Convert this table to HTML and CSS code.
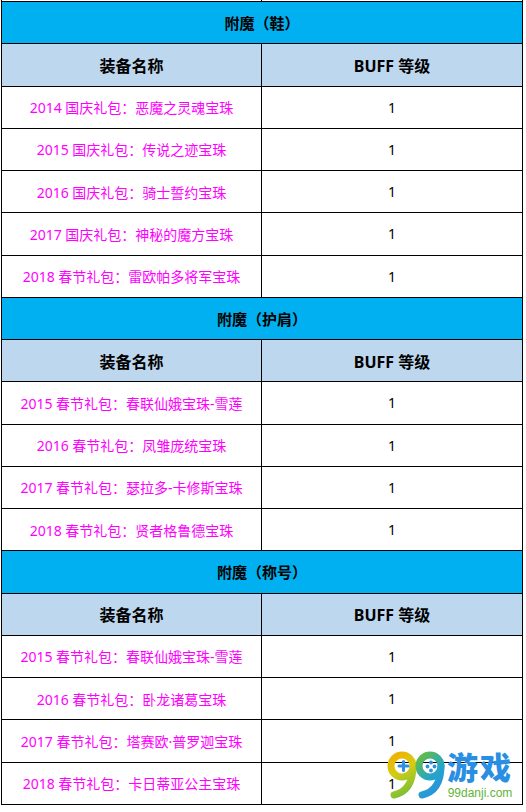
FILE: index.html
```html
<!DOCTYPE html>
<html lang="zh-CN">
<head>
<meta charset="utf-8">
<title>附魔</title>
<link rel="stylesheet" href="styles.css">
</head>
<body>
<div class="sheet">
  <div class="row stub"><div class="cell"></div><div class="cell"></div></div>

  <div class="row title"><div class="cell">附魔（鞋）</div></div>
  <div class="row head"><div class="cell">装备名称</div><div class="cell">BUFF 等级</div></div>
  <div class="row data"><div class="cell name">2014 国庆礼包：恶魔之灵魂宝珠</div><div class="cell">1</div></div>
  <div class="row data"><div class="cell name">2015 国庆礼包：传说之迹宝珠</div><div class="cell">1</div></div>
  <div class="row data"><div class="cell name">2016 国庆礼包：骑士誓约宝珠</div><div class="cell">1</div></div>
  <div class="row data"><div class="cell name">2017 国庆礼包：神秘的魔方宝珠</div><div class="cell">1</div></div>
  <div class="row data"><div class="cell name">2018 春节礼包：雷欧帕多将军宝珠</div><div class="cell">1</div></div>

  <div class="row title"><div class="cell">附魔（护肩）</div></div>
  <div class="row head"><div class="cell">装备名称</div><div class="cell">BUFF 等级</div></div>
  <div class="row data"><div class="cell name">2015 春节礼包：春联仙娥宝珠-雪莲</div><div class="cell">1</div></div>
  <div class="row data"><div class="cell name">2016 春节礼包：凤雏庞统宝珠</div><div class="cell">1</div></div>
  <div class="row data"><div class="cell name">2017 春节礼包：瑟拉多-卡修斯宝珠</div><div class="cell">1</div></div>
  <div class="row data"><div class="cell name">2018 春节礼包：贤者格鲁德宝珠</div><div class="cell">1</div></div>

  <div class="row title"><div class="cell">附魔（称号）</div></div>
  <div class="row head"><div class="cell">装备名称</div><div class="cell">BUFF 等级</div></div>
  <div class="row data"><div class="cell name">2015 春节礼包：春联仙娥宝珠-雪莲</div><div class="cell">1</div></div>
  <div class="row data"><div class="cell name">2016 春节礼包：卧龙诸葛宝珠</div><div class="cell">1</div></div>
  <div class="row data"><div class="cell name">2017 春节礼包：塔赛欧·普罗迦宝珠</div><div class="cell">1</div></div>
  <div class="row data"><div class="cell name">2018 春节礼包：卡日蒂亚公主宝珠</div><div class="cell">1</div></div>

  <div class="watermark">
    <svg class="logo-mark" width="60" height="50" viewBox="0 0 60 50" aria-hidden="true">
      <defs>
        <linearGradient id="g1" x1="2" y1="2" x2="26" y2="46" gradientUnits="userSpaceOnUse">
          <stop offset="0" stop-color="#f7a800"/>
          <stop offset="0.45" stop-color="#d7cc10"/>
          <stop offset="1" stop-color="#6cbf3c"/>
        </linearGradient>
        <linearGradient id="g2" x1="30" y1="10" x2="58" y2="40" gradientUnits="userSpaceOnUse">
          <stop offset="0" stop-color="#62bd45"/>
          <stop offset="0.55" stop-color="#25a6c8"/>
          <stop offset="1" stop-color="#2a8fe2"/>
        </linearGradient>
      </defs>
      <circle cx="16" cy="17" r="11" fill="none" stroke="url(#g1)" stroke-width="7"/>
      <path d="M27 17 C27 33 21 43 8 46" fill="none" stroke="url(#g1)" stroke-width="7" stroke-linecap="round"/>
      <path d="M17.5 12.5 V21.5 M13 17 H22" stroke="#2e90e4" stroke-width="3" stroke-linecap="round"/>
      <circle cx="44" cy="17" r="11" fill="none" stroke="url(#g2)" stroke-width="7"/>
      <path d="M55 17 C55 33 49 43 36 46" fill="none" stroke="url(#g2)" stroke-width="7" stroke-linecap="round"/>
      <circle cx="45" cy="13.5" r="1.9" fill="#2e90e4"/>
      <circle cx="41.5" cy="17.5" r="1.9" fill="#2e90e4"/>
      <circle cx="48.5" cy="17.5" r="1.9" fill="#2e90e4"/>
      <circle cx="45" cy="21.5" r="1.9" fill="#2e90e4"/>
    </svg>
    <div class="logo-text">
      <span class="logo-cn">游戏</span>
      <span class="logo-url">99danji.com</span>
    </div>
  </div>
</div>
</body>
</html>
```

FILE: styles.css
```css
body {
  margin: 0;
  background: #ffffff;
  font-family: "Noto Sans", "Noto Sans CJK SC", sans-serif;
  color: #000000;
}

.sheet {
  position: relative;
  width: 522px;
  margin-left: 1px;
  border-left: 1px solid #000000;
  border-right: 1px solid #000000;
  box-sizing: border-box;
}

.row {
  display: grid;
  grid-template-columns: 259px 1fr;
  height: 42.26px;
  border-bottom: 1px solid #000000;
  box-sizing: border-box;
}

.row.stub {
  height: 2px;
}

.cell {
  display: flex;
  align-items: center;
  justify-content: center;
  white-space: nowrap;
}

.cell + .cell {
  border-left: 1px solid #000000;
}

.title {
  grid-template-columns: 1fr;
  background: #00b0f0;
  font-weight: 700;
  font-size: 15px;
}

.head {
  background: #bdd7ee;
  font-weight: 700;
  font-size: 16px;
}

.data {
  font-size: 14px;
}

.name {
  color: #ff00ff;
}

.watermark {
  position: absolute;
  left: 384px;
  top: 749px;
  display: flex;
  align-items: flex-start;
}

.logo-mark {
  display: block;
}

.logo-text {
  display: flex;
  flex-direction: column;
  align-items: center;
  margin-left: 1px;
  padding-top: 4px;
}

.logo-cn {
  font-family: "Liberation Sans", "Noto Sans CJK SC", sans-serif;
  font-weight: 900;
  font-size: 31px;
  line-height: 32px;
  color: #2a8fe3;
  letter-spacing: 2px;
}

.logo-url {
  font-family: "Liberation Sans", sans-serif;
  font-size: 12px;
  line-height: 12px;
  color: #5fb536;
  margin-top: 2px;
}
```
